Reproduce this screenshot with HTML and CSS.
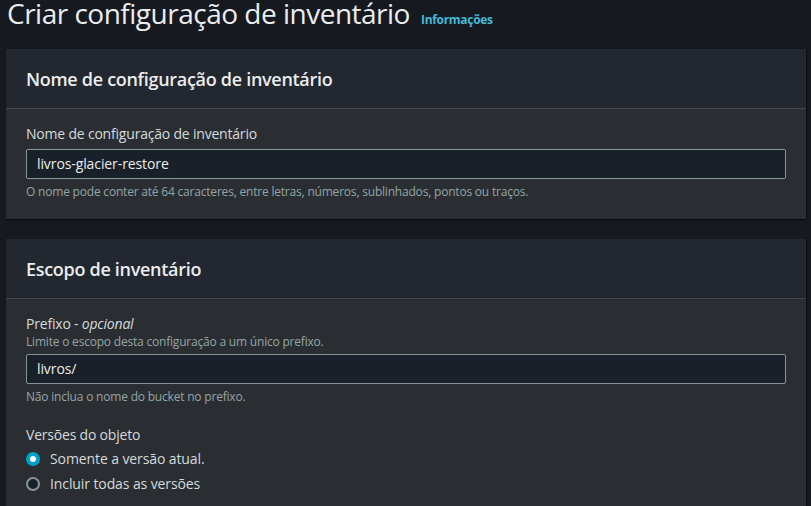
FILE: index.html
```html
<!DOCTYPE html>
<html lang="pt-BR">
<head>
<meta charset="utf-8">
<title>Criar configuração de inventário</title>
<link rel="stylesheet" href="styles.css">
</head>
<body>
<div class="page">
  <div class="page-head">
    <h1 class="page-title">Criar configuração de inventário</h1>
    <a class="info-link" href="#">Informações</a>
  </div>

  <section class="card">
    <div class="card-head"><h2 class="card-title">Nome de configuração de inventário</h2></div>
    <div class="card-body">
      <div class="field">
        <label class="field-label">Nome de configuração de inventário</label>
        <div class="input">livros-glacier-restore</div>
        <div class="hint">O nome pode conter até 64 caracteres, entre letras, números, sublinhados, pontos ou traços.</div>
      </div>
    </div>
  </section>

  <section class="card">
    <div class="card-head"><h2 class="card-title">Escopo de inventário</h2></div>
    <div class="card-body">
      <div class="field">
        <label class="field-label">Prefixo - <em>opcional</em></label>
        <div class="desc">Limite o escopo desta configuração a um único prefixo.</div>
        <div class="input input-after-desc">livros/</div>
        <div class="hint">Não inclua o nome do bucket no prefixo.</div>
      </div>
      <div class="field field-gap">
        <div class="field-label">Versões do objeto</div>
        <div class="radios">
          <div class="radio-row"><span class="radio checked"></span><span class="radio-text">Somente a versão atual.</span></div>
          <div class="radio-row"><span class="radio"></span><span class="radio-text">Incluir todas as versões</span></div>
        </div>
      </div>
    </div>
  </section>
</div>
</body>
</html>
```

FILE: styles.css
```css
* { box-sizing: border-box; }
html, body { margin: 0; padding: 0; }
body {
  background: #16191f;
  font-family: "Open Sans", "Noto Sans", sans-serif;
  color: #d5dbdb;
  width: 811px;
  height: 506px;
  overflow: hidden;
}
.page { padding: 0 5px 0 6px; }
.page-head {
  display: flex;
  align-items: baseline;
  gap: 11px;
  padding-left: 1px;
  height: 49px;
}
.page-title {
  margin: 0;
  font-size: 28px;
  font-weight: 400;
  line-height: 26px;
  color: #eaeded;
  letter-spacing: -0.5px;
}
.info-link {
  color: #44b9d6;
  font-size: 12px;
  font-weight: 700;
  letter-spacing: -0.3px;
  text-decoration: none;
}
.card {
  width: 800px;
  background: #2a2e33;
  box-shadow: 0 1px 1px 0 rgba(0,0,0,0.45), 1px 0 1px 0 rgba(0,0,0,0.3);
  margin-bottom: 20px;
}
.card-head {
  height: 60px;
  background: #232730;
  border-bottom: 1px solid #414750;
  display: flex;
  align-items: center;
  padding: 0 20px;
}
.card-title {
  margin: 0;
  font-size: 18px;
  font-weight: 600;
  color: #eaeded;
  line-height: 22px;
  letter-spacing: -0.3px;
  padding-top: 1px;
}
.card-body { padding: 15px 20px 19px; }
.field-label {
  display: block;
  font-size: 14px;
  line-height: 20px;
  color: #d5dbdb;
  letter-spacing: -0.2px;
}
.field-label em { font-style: italic; }
.desc {
  font-size: 12px;
  line-height: 16px;
  color: #95a5a6;
  letter-spacing: -0.2px;
}
.input {
  margin-top: 5px;
  height: 30px;
  width: 760px;
  border: 1px solid #879596;
  border-radius: 2px;
  background: #1a2029;
  color: #eaeded;
  font-size: 14px;
  line-height: 28px;
  padding: 0 10px;
  letter-spacing: -0.1px;
}
.input-after-desc { margin-top: 4px; }
.hint {
  margin-top: 5px;
  font-size: 12px;
  line-height: 16px;
  color: #95a5a6;
  letter-spacing: -0.2px;
}
.field-gap { margin-top: 20px; }
.radios { padding-top: 1px; }
.radio-row {
  display: flex;
  align-items: center;
  height: 25px;
  gap: 10px;
}
.radio {
  width: 14px;
  height: 14px;
  border-radius: 50%;
  border: 2px solid #879596;
  background: #1a2029;
  flex: none;
}
.radio.checked {
  border: 4px solid #00a1c9;
  background: #ffffff;
}
.radio-text {
  font-size: 14px;
  color: #d5dbdb;
  letter-spacing: -0.1px;
}
```
